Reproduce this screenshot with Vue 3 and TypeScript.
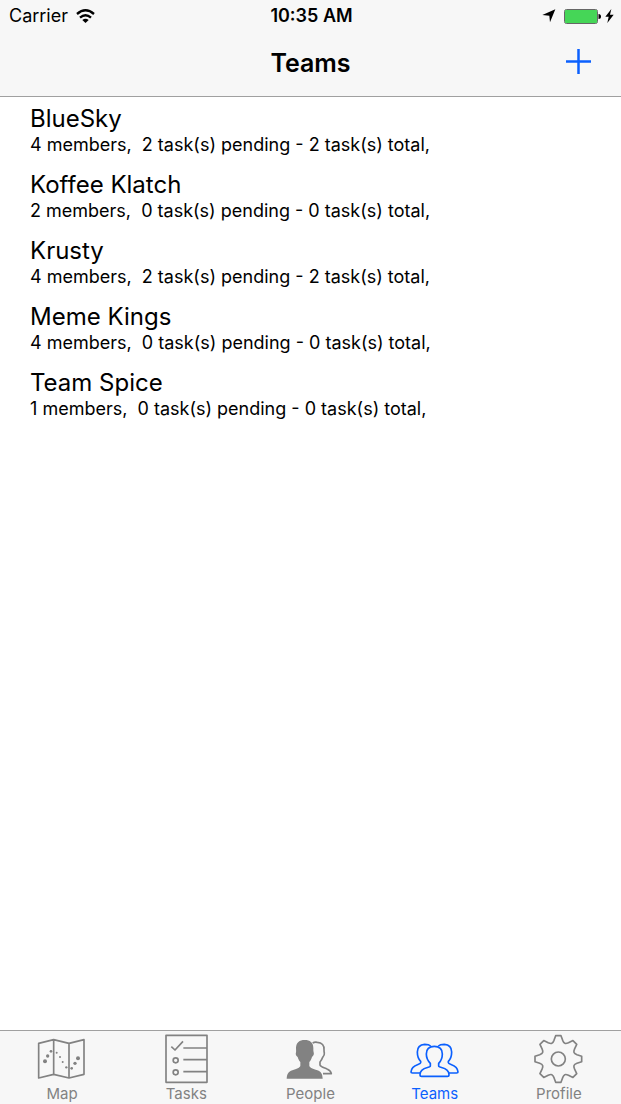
<script setup lang="ts">
import { ref } from 'vue'

interface Team {
  name: string
  members: number
  pending: number
  total: number
}

type TabId = 'map' | 'tasks' | 'people' | 'teams' | 'profile'

const teams: Team[] = [
  { name: 'BlueSky', members: 4, pending: 2, total: 2 },
  { name: 'Koffee Klatch', members: 2, pending: 0, total: 0 },
  { name: 'Krusty', members: 4, pending: 2, total: 2 },
  { name: 'Meme Kings', members: 4, pending: 0, total: 0 },
  { name: 'Team Spice', members: 1, pending: 0, total: 0 },
]

const tabs: { id: TabId; label: string }[] = [
  { id: 'map', label: 'Map' },
  { id: 'tasks', label: 'Tasks' },
  { id: 'people', label: 'People' },
  { id: 'teams', label: 'Teams' },
  { id: 'profile', label: 'Profile' },
]

const activeTab = ref<TabId>('teams')

// Outline of an eight-toothed cog centred on the origin.
function gearPath(): string {
  const at = (x: number, y: number, turn: number): string => {
    const a = (turn * Math.PI) / 4
    const px = x * Math.cos(a) - y * Math.sin(a)
    const py = x * Math.sin(a) + y * Math.cos(a)
    return `${px.toFixed(1)} ${py.toFixed(1)}`
  }
  let d = ''
  for (let i = 0; i < 8; i++) {
    d += `${i === 0 ? 'M' : 'L'}${at(-8, -70, i)}L${at(8, -70, i)}L${at(13, -56, i)}`
    d += `C${at(17, -46, i)} ${at(-17, -46, i + 1)} ${at(-13, -56, i + 1)}`
  }
  return d + 'Z'
}

const gear = gearPath()
</script>

<template>
  <div class="screen">
    <header class="top">
      <div class="status">
        <div class="status-left">
          <span>Carrier</span>
          <svg class="wifi" viewBox="0 0 57 42" aria-hidden="true">
            <g fill="none" stroke="#000" stroke-width="7">
              <path d="M3 15Q28.500 -7 54 15" />
              <path d="M12 26Q28.500 11 45 26" />
            </g>
            <path d="M19 33Q28.500 25 38 33L28.500 42Z" />
          </svg>
        </div>
        <span class="clock">10:35 AM</span>
        <div class="status-right">
          <svg class="arrow" viewBox="0 0 42 42" aria-hidden="true">
            <path d="M40 1L24 40L22 20L1 18Z" />
          </svg>
          <svg class="battery" viewBox="0 0 37 15" aria-hidden="true">
            <rect x=".5" y=".5" width="33" height="14" rx="2" fill="#a5e8ae" stroke="#666" />
            <rect x="1" y="1" width="32" height="13" rx="1" fill="#45d657" />
            <path d="M34.500 5Q37 5 37 7.500Q37 10 34.500 10Z" />
          </svg>
          <svg class="bolt" viewBox="0 0 27 42" aria-hidden="true">
            <path d="M19 0L1 23H11L7 42L26 17H15Z" />
          </svg>
        </div>
      </div>
      <div class="bar">
        <h1>Teams</h1>
        <button class="add" type="button" aria-label="Add team">
          <svg viewBox="0 0 25 25" aria-hidden="true">
            <path d="M12.500 0V25M0 12.500H25" stroke="currentColor" stroke-width="2.500" />
          </svg>
        </button>
      </div>
    </header>

    <main>
      <ul class="teams">
        <li v-for="team in teams" :key="team.name">
          <h2>{{ team.name }}</h2>
          <p>{{ team.members }} members,&nbsp; {{ team.pending }} task(s) pending - {{ team.total }} task(s) total,</p>
        </li>
      </ul>
    </main>

    <nav class="tabs">
      <button
        v-for="tab in tabs"
        :key="tab.id"
        type="button"
        :class="{ active: tab.id === activeTab }"
        @click="activeTab = tab.id"
      >
        <svg v-if="tab.id === 'map'" viewBox="51 27 150 150" aria-hidden="true">
          <path class="line" d="M56 55L101 44L147 55L192 44V148L147 159L101 148L56 159ZM101 44V148M147 55V159" />
          <g fill="currentColor">
            <circle cx="75" cy="109" r="6" /><circle cx="83" cy="93" r="5" />
            <circle cx="93" cy="79" r="4" /><circle cx="110" cy="83" r="3" />
            <circle cx="120" cy="96" r="3" /><circle cx="128" cy="111" r="3" />
            <circle cx="139" cy="127" r="3.500" /><circle cx="155" cy="130" r="4" />
            <circle cx="165" cy="115" r="5" /><circle cx="174" cy="100" r="6" />
          </g>
        </svg>
        <svg v-else-if="tab.id === 'tasks'" viewBox="49 27 150 150" aria-hidden="true">
          <path class="line" d="M64 31H187V172H64ZM116 69H187M116 104H187M116 140H187M80 65L91 75L115 49" />
          <circle class="line" cx="93" cy="106" r="7.500" />
          <circle class="line" cx="93" cy="142" r="7.500" />
        </svg>
        <svg v-else-if="tab.id === 'people'" viewBox="46 27 150 150" aria-hidden="true">
          <path
            fill="currentColor"
            d="M105 45C121 45 131 53 131 68C131 76 131 77 132 82C134 88 131 93 127 96C125 103 123 107 119 111V122C120 128 130 131 143 136C155 140 158 147 159 161H51C52 147 56 140 68 136C81 131 91 128 92 122V111C88 107 86 103 84 96C79 93 77 88 79 82C80 77 79 76 79 68C80 53 89 45 105 45Z"
          />
          <path
            class="line"
            d="M129 54C134 51 138 51 143 52C157 53 164 61 163 74C163 79 163 81 164 84C165 90 162 94 159 97C157 103 155 107 151 111V120C153 126 163 128 172 132C182 136 184 139 185 146H160"
          />
        </svg>
        <svg v-else-if="tab.id === 'teams'" viewBox="59 27 150 150" aria-hidden="true">
          <path
            class="line"
            d="M132 64C148 64 156 73 156 87C156 100 151 109 145 115V123C145 130 176 124 176 149Q176 154 171 154H94Q89 154 89 149C89 124 120 130 120 123V115C114 109 108 100 108 87C108 73 116 64 132 64Z"
          />
          <path class="line" d="M121 63C116 58 110 58 103 58C89 59 81 67 81 81C81 94 86 104 91 109V113C91 120 63 117 62 141Q62 144 66 144H89" />
          <path class="line" d="M144 63C149 58 155 58 162 58C176 59 184 67 184 81C184 94 179 104 174 109V113C174 120 202 117 203 141Q203 144 199 144H176" />
        </svg>
        <svg v-else viewBox="57 27 150 150" aria-hidden="true">
          <g transform="translate(130 102)">
            <path class="line" :d="gear" />
            <circle class="line" r="21" />
          </g>
        </svg>
        <span>{{ tab.label }}</span>
      </button>
    </nav>
  </div>
</template>

<style>
body {
  margin: 0;
  background: #fff;
}
</style>

<style scoped>
.screen {
  display: flex;
  flex-direction: column;
  min-height: 100vh;
  color: #000;
  font-family: Inter, "Liberation Sans", sans-serif;
}

.top {
  background: #f7f7f7;
  border-bottom: 1px solid #a0a0a0;
}

.status {
  display: grid;
  grid-template-columns: 1fr auto 1fr;
  align-items: center;
  height: 32px;
  padding: 0 7px 0 9px;
  font-size: 18px;
  line-height: 32px;
}

.status-left,
.status-right {
  display: flex;
  align-items: center;
}

.status-left {
  gap: 8px;
}

.status-right {
  justify-content: flex-end;
}

.clock {
  font-weight: 600;
}

.wifi {
  width: 19px;
  height: 14px;
}

.arrow {
  width: 14px;
  height: 14px;
  margin-right: 8px;
}

.battery {
  width: 37px;
  height: 15px;
  margin-right: 4px;
}

.bolt {
  width: 9px;
  height: 14px;
}

.bar {
  display: grid;
  grid-template-columns: 1fr auto 1fr;
  align-items: center;
  height: 62px;
  padding: 0 30px 2px;
}

h1 {
  grid-column: 2;
  margin: 0;
  font-size: 25px;
  font-weight: 600;
  line-height: 62px;
}

button {
  padding: 0;
  border: 0;
  background: none;
  font: inherit;
  cursor: pointer;
}

.add {
  display: flex;
  justify-self: end;
  padding-bottom: 4px;
  color: #0b60fe;
}

.add svg {
  width: 25px;
  height: 25px;
}

main {
  flex: 1;
}

.teams {
  margin: 0;
  padding: 0;
  list-style: none;
}

.teams li {
  padding: 7px 30px;
}

h2 {
  margin: 0;
  font-size: 24px;
  font-weight: 400;
  line-height: 30px;
}

p {
  margin: 0;
  font-size: 18px;
  line-height: 22px;
}

.tabs {
  display: grid;
  grid-template-columns: repeat(5, 1fr);
  background: #f7f7f7;
  border-top: 1px solid #a0a0a0;
}

.tabs button {
  display: flex;
  flex-direction: column;
  align-items: center;
  padding-top: 3px;
  color: #828282;
  font-size: 15px;
  line-height: 20px;
}

.tabs button.active {
  color: #0b60fe;
}

.tabs svg {
  width: 50px;
  height: 50px;
}

.line {
  fill: none;
  stroke: currentColor;
  stroke-width: 5;
  stroke-linejoin: round;
}
</style>
